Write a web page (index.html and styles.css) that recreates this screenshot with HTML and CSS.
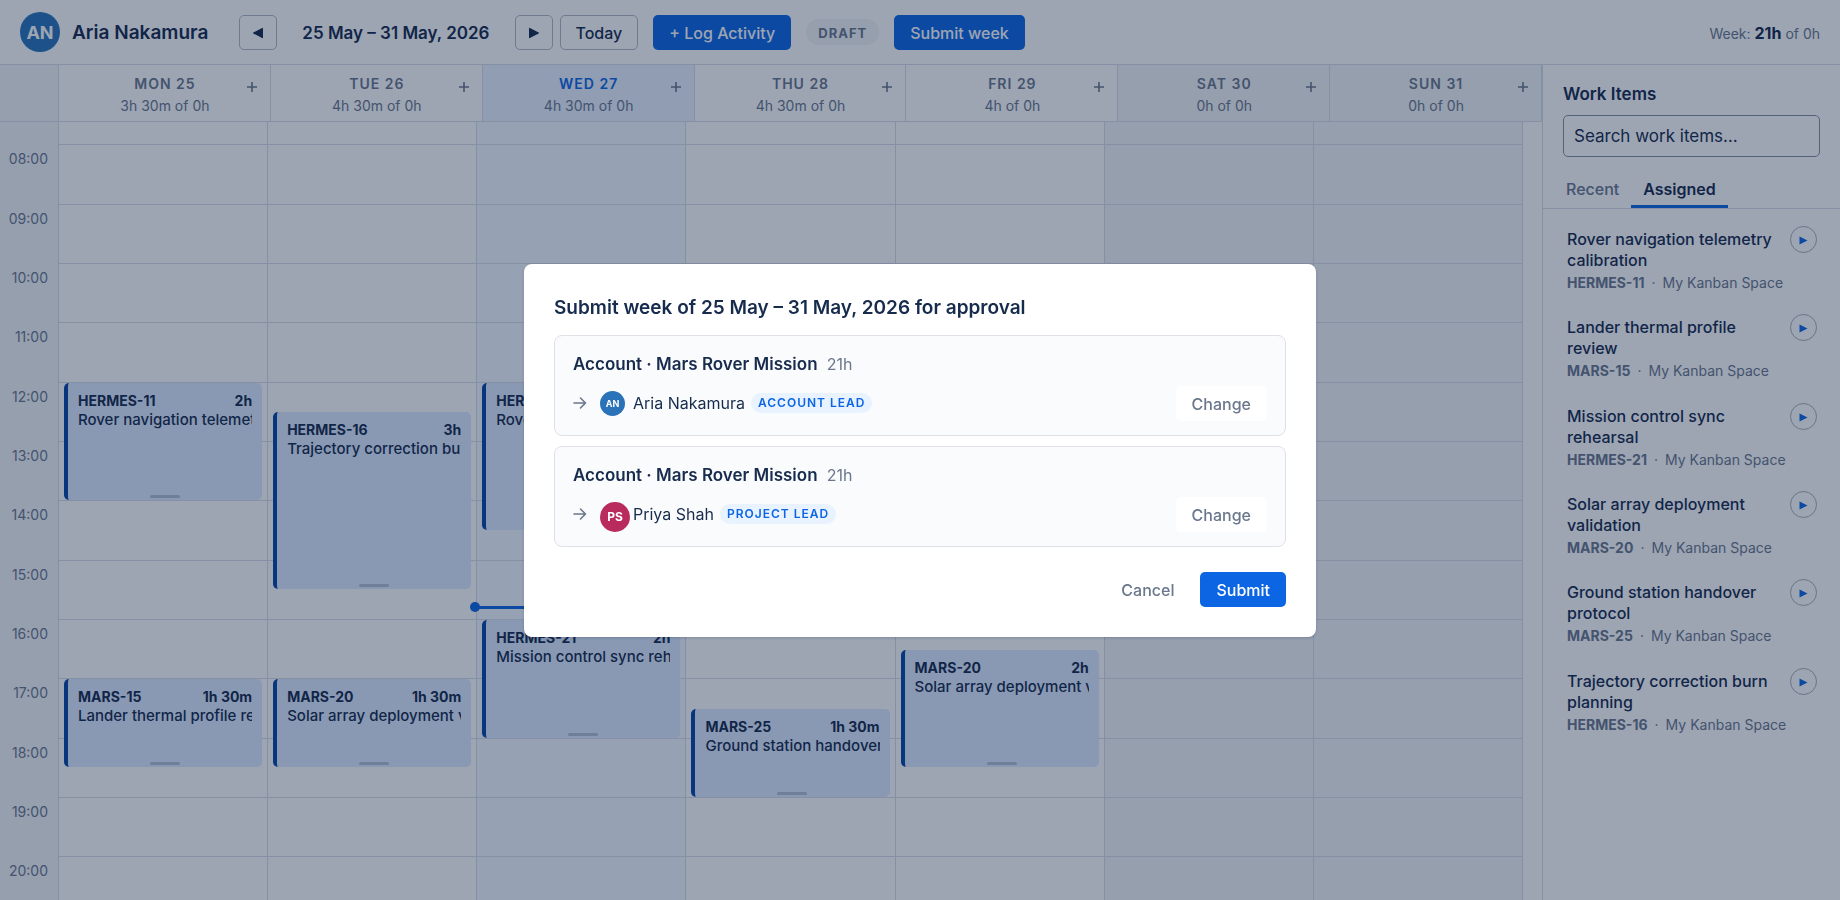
FILE: index.html
```html
<!DOCTYPE html>
<html lang="en">
<head>
<meta charset="utf-8">
<title>Timesheet – Aria Nakamura</title>
<link rel="stylesheet" href="styles.css">
</head>
<body>
<div class="app">
  <header class="topbar">
    <div class="user"><span class="avatar avatar-lg">AN</span><h1 class="user-name">Aria Nakamura</h1></div>
    <nav class="week-nav" aria-label="Week">
      <button class="btn btn-outline btn-arrow" type="button" aria-label="Previous week"><svg class="tri" viewBox="0 0 12 12"><path d="M11 1.4v9.2a.6.6 0 0 1-.9.5L1.3 6.5a.6.6 0 0 1 0-1L10.100 .9a.6.6 0 0 1 .9.5z"/></svg></button>
      <span class="week-label">25 May – 31 May, 2026</span>
      <button class="btn btn-outline btn-arrow" type="button" aria-label="Next week"><svg class="tri" viewBox="0 0 12 12"><path d="M1 1.4v9.2a.6.6 0 0 0 .9.5l8.800-4.600a.6.6 0 0 0 0-1L1.900 .9a.6.6 0 0 0-.9.5z"/></svg></button>
      <button class="btn btn-outline btn-today" type="button">Today</button>
    </nav>
    <button class="btn btn-primary" type="button">+ Log Activity</button>
    <span class="status">DRAFT</span>
    <button class="btn btn-primary" type="button">Submit week</button>
    <p class="week-total">Week: <strong>21h</strong> of 0h</p>
  </header>

  <div class="main">
    <section class="calendar" aria-label="Week calendar">
      <div class="day-heads">
        <div class="corner"></div>
        <div class="day-head"><div class="day-text"><h2>MON 25</h2><p>3h 30m of 0h</p></div><button class="add" type="button" aria-label="Add on Monday"><svg viewBox="0 0 12 12"><path d="M6 1v10M1 6h10"/></svg></button></div>
        <div class="day-head"><div class="day-text"><h2>TUE 26</h2><p>4h 30m of 0h</p></div><button class="add" type="button" aria-label="Add on Tuesday"><svg viewBox="0 0 12 12"><path d="M6 1v10M1 6h10"/></svg></button></div>
        <div class="day-head today"><div class="day-text"><h2>WED 27</h2><p>4h 30m of 0h</p></div><button class="add" type="button" aria-label="Add on Wednesday"><svg viewBox="0 0 12 12"><path d="M6 1v10M1 6h10"/></svg></button></div>
        <div class="day-head"><div class="day-text"><h2>THU 28</h2><p>4h 30m of 0h</p></div><button class="add" type="button" aria-label="Add on Thursday"><svg viewBox="0 0 12 12"><path d="M6 1v10M1 6h10"/></svg></button></div>
        <div class="day-head"><div class="day-text"><h2>FRI 29</h2><p>4h of 0h</p></div><button class="add" type="button" aria-label="Add on Friday"><svg viewBox="0 0 12 12"><path d="M6 1v10M1 6h10"/></svg></button></div>
        <div class="day-head weekend"><div class="day-text"><h2>SAT 30</h2><p>0h of 0h</p></div><button class="add" type="button" aria-label="Add on Saturday"><svg viewBox="0 0 12 12"><path d="M6 1v10M1 6h10"/></svg></button></div>
        <div class="day-head weekend"><div class="day-text"><h2>SUN 31</h2><p>0h of 0h</p></div><button class="add" type="button" aria-label="Add on Sunday"><svg viewBox="0 0 12 12"><path d="M6 1v10M1 6h10"/></svg></button></div>
      </div>
      <div class="scroller">
        <div class="hours">
          <div class="times">
            <span></span><span>08:00</span><span>09:00</span><span>10:00</span><span>11:00</span><span>12:00</span><span>13:00</span><span>14:00</span><span>15:00</span><span>16:00</span><span>17:00</span><span>18:00</span><span>19:00</span><span>20:00</span><span></span>
          </div>
          <div class="day">
            <div class="lines"><i></i><i></i><i></i><i></i><i></i><i></i><i></i><i></i><i></i><i></i><i></i><i></i><i></i><i></i><i></i></div>
            <article class="event" style="grid-row: 11 / span 4"><div class="event-top"><b>HERMES-11</b><b>2h</b></div><p>Rover navigation telemetry calibration</p></article>
            <article class="event" style="grid-row: 21 / span 3"><div class="event-top"><b>MARS-15</b><b>1h 30m</b></div><p>Lander thermal profile review</p></article>
          </div>
          <div class="day">
            <div class="lines"><i></i><i></i><i></i><i></i><i></i><i></i><i></i><i></i><i></i><i></i><i></i><i></i><i></i><i></i><i></i></div>
            <article class="event" style="grid-row: 12 / span 6"><div class="event-top"><b>HERMES-16</b><b>3h</b></div><p>Trajectory correction burn planning</p></article>
            <article class="event" style="grid-row: 21 / span 3"><div class="event-top"><b>MARS-20</b><b>1h 30m</b></div><p>Solar array deployment validation</p></article>
          </div>
          <div class="day today">
            <div class="lines"><i></i><i></i><i></i><i></i><i></i><i></i><i></i><i></i><i></i><i></i><i></i><i></i><i></i><i></i><i></i></div>
            <article class="event" style="grid-row: 11 / span 5"><div class="event-top"><b>HERMES-11</b><b>2h 30m</b></div><p>Rover navigation telemetry calibration</p></article>
            <article class="event" style="grid-row: 19 / span 4"><div class="event-top"><b>HERMES-21</b><b>2h</b></div><p>Mission control sync rehearsal</p></article>
            <div class="now" style="top: 58.5%"></div>
          </div>
          <div class="day">
            <div class="lines"><i></i><i></i><i></i><i></i><i></i><i></i><i></i><i></i><i></i><i></i><i></i><i></i><i></i><i></i><i></i></div>
            <article class="event" style="grid-row: 22 / span 3"><div class="event-top"><b>MARS-25</b><b>1h 30m</b></div><p>Ground station handover protocol</p></article>
          </div>
          <div class="day">
            <div class="lines"><i></i><i></i><i></i><i></i><i></i><i></i><i></i><i></i><i></i><i></i><i></i><i></i><i></i><i></i><i></i></div>
            <article class="event" style="grid-row: 20 / span 4"><div class="event-top"><b>MARS-20</b><b>2h</b></div><p>Solar array deployment validation</p></article>
          </div>
          <div class="day weekend">
            <div class="lines"><i></i><i></i><i></i><i></i><i></i><i></i><i></i><i></i><i></i><i></i><i></i><i></i><i></i><i></i><i></i></div>
          </div>
          <div class="day weekend">
            <div class="lines"><i></i><i></i><i></i><i></i><i></i><i></i><i></i><i></i><i></i><i></i><i></i><i></i><i></i><i></i><i></i></div>
          </div>
        </div>
      </div>
    </section>

    <aside class="sidebar">
      <div class="side-head">
        <h2>Work Items</h2>
        <input class="search" type="search" placeholder="Search work items…" aria-label="Search work items">
      </div>
      <div class="tabs" role="tablist">
        <button class="tab" type="button" role="tab" aria-selected="false">Recent</button>
        <button class="tab active" type="button" role="tab" aria-selected="true">Assigned</button>
      </div>
      <ul class="items">
        <li><div><h3>Rover navigation telemetry calibration</h3><p><b>HERMES-11</b><span>·</span>My Kanban Space</p></div><button class="play" type="button" aria-label="Start timer"><svg viewBox="0 0 9 9"><path d="M.5.5v8l8-4z"/></svg></button></li>
        <li><div><h3>Lander thermal profile review</h3><p><b>MARS-15</b><span>·</span>My Kanban Space</p></div><button class="play" type="button" aria-label="Start timer"><svg viewBox="0 0 9 9"><path d="M.5.5v8l8-4z"/></svg></button></li>
        <li><div><h3>Mission control sync rehearsal</h3><p><b>HERMES-21</b><span>·</span>My Kanban Space</p></div><button class="play" type="button" aria-label="Start timer"><svg viewBox="0 0 9 9"><path d="M.5.5v8l8-4z"/></svg></button></li>
        <li><div><h3>Solar array deployment validation</h3><p><b>MARS-20</b><span>·</span>My Kanban Space</p></div><button class="play" type="button" aria-label="Start timer"><svg viewBox="0 0 9 9"><path d="M.5.5v8l8-4z"/></svg></button></li>
        <li><div><h3>Ground station handover protocol</h3><p><b>MARS-25</b><span>·</span>My Kanban Space</p></div><button class="play" type="button" aria-label="Start timer"><svg viewBox="0 0 9 9"><path d="M.5.5v8l8-4z"/></svg></button></li>
        <li><div><h3>Trajectory correction burn planning</h3><p><b>HERMES-16</b><span>·</span>My Kanban Space</p></div><button class="play" type="button" aria-label="Start timer"><svg viewBox="0 0 9 9"><path d="M.5.5v8l8-4z"/></svg></button></li>
      </ul>
    </aside>
  </div>
</div>

<div class="overlay">
  <section class="modal" role="dialog" aria-modal="true" aria-labelledby="modal-title">
    <h2 id="modal-title">Submit week of 25 May – 31 May, 2026 for approval</h2>
    <div class="routes">
      <div class="route">
        <h3>Account · Mars Rover Mission <span>21h</span></h3>
        <div class="approver">
          <svg class="arrow" viewBox="0 0 14 12"><path d="M1 6h11.500M7.500 1l5 5-5 5"/></svg>
          <span class="slot"><span class="avatar avatar-sm">AN</span></span>
          <span class="approver-name">Aria Nakamura</span>
          <span class="role">ACCOUNT LEAD</span>
          <button class="btn btn-subtle" type="button">Change</button>
        </div>
      </div>
      <div class="route">
        <h3>Account · Mars Rover Mission <span>21h</span></h3>
        <div class="approver">
          <svg class="arrow" viewBox="0 0 14 12"><path d="M1 6h11.500M7.500 1l5 5-5 5"/></svg>
          <span class="slot"><span class="avatar avatar-md">PS</span></span>
          <span class="approver-name">Priya Shah</span>
          <span class="role">PROJECT LEAD</span>
          <button class="btn btn-subtle" type="button">Change</button>
        </div>
      </div>
    </div>
    <div class="actions">
      <button class="btn btn-subtle" type="button">Cancel</button>
      <button class="btn btn-primary" type="button">Submit</button>
    </div>
  </section>
</div>
</body>
</html>
```

FILE: styles.css
```css
:root {
  --ink: #172b4d;
  --muted: #6b778c;
  --line: #dfe1e6;
  --grid: #d8dce6;
  --shade: #f4f5f7;
  --blue: #0c66e4;
}

* { box-sizing: border-box; margin: 0; padding: 0; }

body {
  font-family: Inter, "Liberation Sans", sans-serif;
  font-size: 16px;
  color: var(--ink);
  background: #fff;
}

button, input { font: inherit; color: inherit; }

.app { display: flex; flex-direction: column; height: 100vh; overflow: hidden; }

/* Top bar */
.topbar {
  display: flex;
  align-items: center;
  gap: 15px;
  padding: 12px 20px;
  border-bottom: 1px solid var(--grid);
  white-space: nowrap;
}
.user { display: flex; align-items: center; gap: 12px; margin-right: 16px; }
.user-name { padding-top: 2px; font-size: 19px; font-weight: 600; line-height: 24px; }

.avatar {
  display: inline-flex;
  flex: none;
  align-items: center;
  justify-content: center;
  border-radius: 50%;
  color: #fff;
  font-weight: 700;
  background: #2b73b9;
}
.avatar-lg { width: 40px; height: 40px; font-size: 18px; }
.avatar-sm { width: 25px; height: 25px; font-size: 9px; }
.avatar-md { width: 30px; height: 30px; font-size: 12px; background: #b92b5d; }

.week-nav { display: flex; align-items: center; }
.week-label { padding: 2px 25px 0; font-size: 17px; font-weight: 600; line-height: 24px; }

.btn {
  height: 35px;
  padding: 2px 16px 0;
  border: 0;
  border-radius: 5px;
  font-size: 16px;
  font-weight: 500;
  line-height: 20px;
  white-space: nowrap;
}
.btn-outline { border: 1px solid #b3b9c4; background: #fff; }
.btn-arrow { display: flex; align-items: center; justify-content: center; width: 38px; padding: 2px 0 0; }
.btn-today { margin-left: 7px; padding: 2px 15px 0; }
.btn-primary { background: var(--blue); color: #fff; }
.btn-subtle { background: #fff; color: var(--muted); }
.tri { width: 12px; height: 12px; fill: var(--ink); }

.status {
  padding: 4px 12px 2px;
  border-radius: 14px;
  background: var(--shade);
  color: var(--muted);
  font-size: 13px;
  font-weight: 700;
  line-height: 20px;
  letter-spacing: 1px;
}
.week-total { margin-left: auto; padding-top: 2px; font-size: 14px; color: var(--muted); }
.week-total strong { font-size: 16px; font-weight: 700; color: var(--ink); }

/* Calendar */
.main { display: flex; flex: 1; min-height: 0; }
.calendar { display: flex; flex: 1; flex-direction: column; min-width: 0; }

.day-heads, .hours { display: grid; grid-template-columns: 59px repeat(7, minmax(0, 1fr)); }
.day-heads { border-bottom: 1px solid var(--grid); }
.corner { border-right: 1px solid var(--grid); background: var(--shade); }
.day-head {
  display: grid;
  grid-template-columns: 1fr auto 1fr;
  padding: 9px 6px 6px 7px;
  border-right: 1px solid var(--grid);
  text-align: center;
  color: var(--muted);
}
.day-text { grid-column: 2; }
.day-head h2 { font-size: 14px; font-weight: 600; line-height: 20px; letter-spacing: 1px; }
.day-head p { padding-top: 2px; font-size: 14px; line-height: 19px; }
.day-head.today { background: #e9f2ff; }
.day-head.today h2 { color: var(--blue); }
.weekend { background: var(--shade); }
.add {
  display: flex;
  align-items: center;
  justify-content: center;
  justify-self: end;
  width: 24px;
  height: 26px;
  border: 0;
  background: none;
}
.add svg { width: 12px; height: 12px; fill: none; stroke: var(--muted); stroke-width: 1.6; }

.scroller { flex: 1; min-height: 0; padding-right: 19px; overflow: hidden; }
.hours { height: 890px; margin-top: -37px; }
.times {
  display: grid;
  grid-template-rows: repeat(15, 1fr);
  padding-right: 10px;
  border-right: 1px solid var(--grid);
  background: var(--shade);
  color: var(--muted);
  font-size: 14px;
  line-height: 30px;
  text-align: right;
}
.day {
  position: relative;
  display: grid;
  grid-template-rows: repeat(30, minmax(0, 1fr));
  grid-template-columns: minmax(0, 1fr);
  border-right: 1px solid var(--grid);
}
.day.today { background: #f4f8ff; }
.lines { display: grid; grid-area: 1 / 1 / -1 / 1; grid-template-rows: repeat(15, 1fr); }
.lines i { border-top: 1px solid var(--grid); }

.event {
  display: flex;
  flex-direction: column;
  grid-column: 1;
  margin: 1px 5px 0;
  padding: 8px 10px 2px;
  overflow: hidden;
  border-left: 4px solid #0747a6;
  border-radius: 5px;
  background: #deebff;
  white-space: nowrap;
}
.event-top { display: flex; justify-content: space-between; font-size: 14px; line-height: 19px; }
.event-top b { font-weight: 700; }
.event p { overflow: hidden; font-size: 15px; font-weight: 500; line-height: 20px; }
.event::after {
  content: "";
  flex: none;
  width: 30px;
  height: 3px;
  margin: auto auto 0;
  border-radius: 2px;
  background: #b3bfd4;
}

.now { position: absolute; left: 0; right: 0; height: 3px; background: var(--blue); }
.now::before {
  content: "";
  position: absolute;
  top: -4px;
  left: -7px;
  width: 10px;
  height: 10px;
  border-radius: 50%;
  background: var(--blue);
}

/* Work items */
.sidebar { flex: none; width: 298px; border-left: 1px solid var(--grid); }
.side-head { padding: 17px 20px 15px; }
.side-head h2 { font-size: 17px; font-weight: 600; line-height: 24px; }
.search {
  display: block;
  width: 100%;
  height: 42px;
  margin-top: 9px;
  padding: 0 10px;
  border: 1px solid #8590a2;
  border-radius: 5px;
  background: #fff;
  font-size: 17px;
}
.search::placeholder { color: var(--ink); opacity: 1; }
.tabs { display: flex; padding: 0 11px; border-bottom: 1px solid var(--grid); }
.tab {
  height: 36px;
  padding: 0 12px;
  border: 0;
  border-bottom: 3px solid transparent;
  background: none;
  color: var(--muted);
  font-size: 16px;
  font-weight: 500;
  line-height: 20px;
}
.tab.active { border-color: var(--blue); color: var(--ink); font-weight: 600; }
.items { display: grid; grid-auto-rows: 1fr; min-height: 530px; padding: 0 23px 0 24px; list-style: none; }
.items li { display: flex; justify-content: space-between; padding-top: 20px; }
.items h3 { font-size: 16px; font-weight: 500; line-height: 21px; }
.items p { padding-top: 2px; color: var(--muted); font-size: 14px; line-height: 20px; white-space: nowrap; }
.items p b { font-weight: 700; }
.items p span { margin: 0 7px; }
.items li > div { flex: 1; width: 0; }
.play {
  display: flex;
  flex: none;
  align-items: center;
  justify-content: center;
  width: 27px;
  height: 27px;
  margin-top: -3px;
  padding-top: 2px;
  border: 1px solid #a5adba;
  border-radius: 50%;
  background: none;
}
.play svg { width: 9px; height: 9px; fill: var(--blue); }

/* Submit dialog */
.overlay {
  position: fixed;
  inset: 0;
  display: grid;
  place-items: center;
  background: rgba(9, 30, 66, 0.4);
}
.modal {
  width: 792px;
  max-width: 90%;
  padding: 30px;
  border-radius: 8px;
  background: #fff;
  box-shadow: 0 1px 3px rgba(9, 30, 66, 0.2);
}
.modal h2 { font-size: 19px; font-weight: 600; line-height: 27px; }
.routes { display: grid; gap: 10px; margin: 14px 0 25px; }
.route { padding: 17px 18px 14px; border: 1px solid var(--line); border-radius: 8px; background: #fafbfc; }
.route h3 { font-size: 17px; font-weight: 600; line-height: 22px; }
.route h3 span { padding-left: 5px; color: var(--muted); font-size: 16px; font-weight: 400; }
.approver { display: flex; align-items: center; height: 35px; margin-top: 11px; }
.arrow { width: 14px; height: 12px; fill: none; stroke: var(--muted); stroke-width: 1.6; stroke-linecap: round; stroke-linejoin: round; }
.slot { width: 25px; height: 25px; margin: 0 8px 0 13px; }
.approver-name { font-size: 16px; }
.role {
  margin-left: 6px;
  padding: 0 7px;
  border-radius: 10px;
  background: #e9f2ff;
  color: var(--blue);
  font-size: 12px;
  font-weight: 600;
  line-height: 20px;
  letter-spacing: 1px;
}
.approver .btn { margin-left: auto; }
.actions { display: flex; justify-content: flex-end; gap: 10px; }
```
